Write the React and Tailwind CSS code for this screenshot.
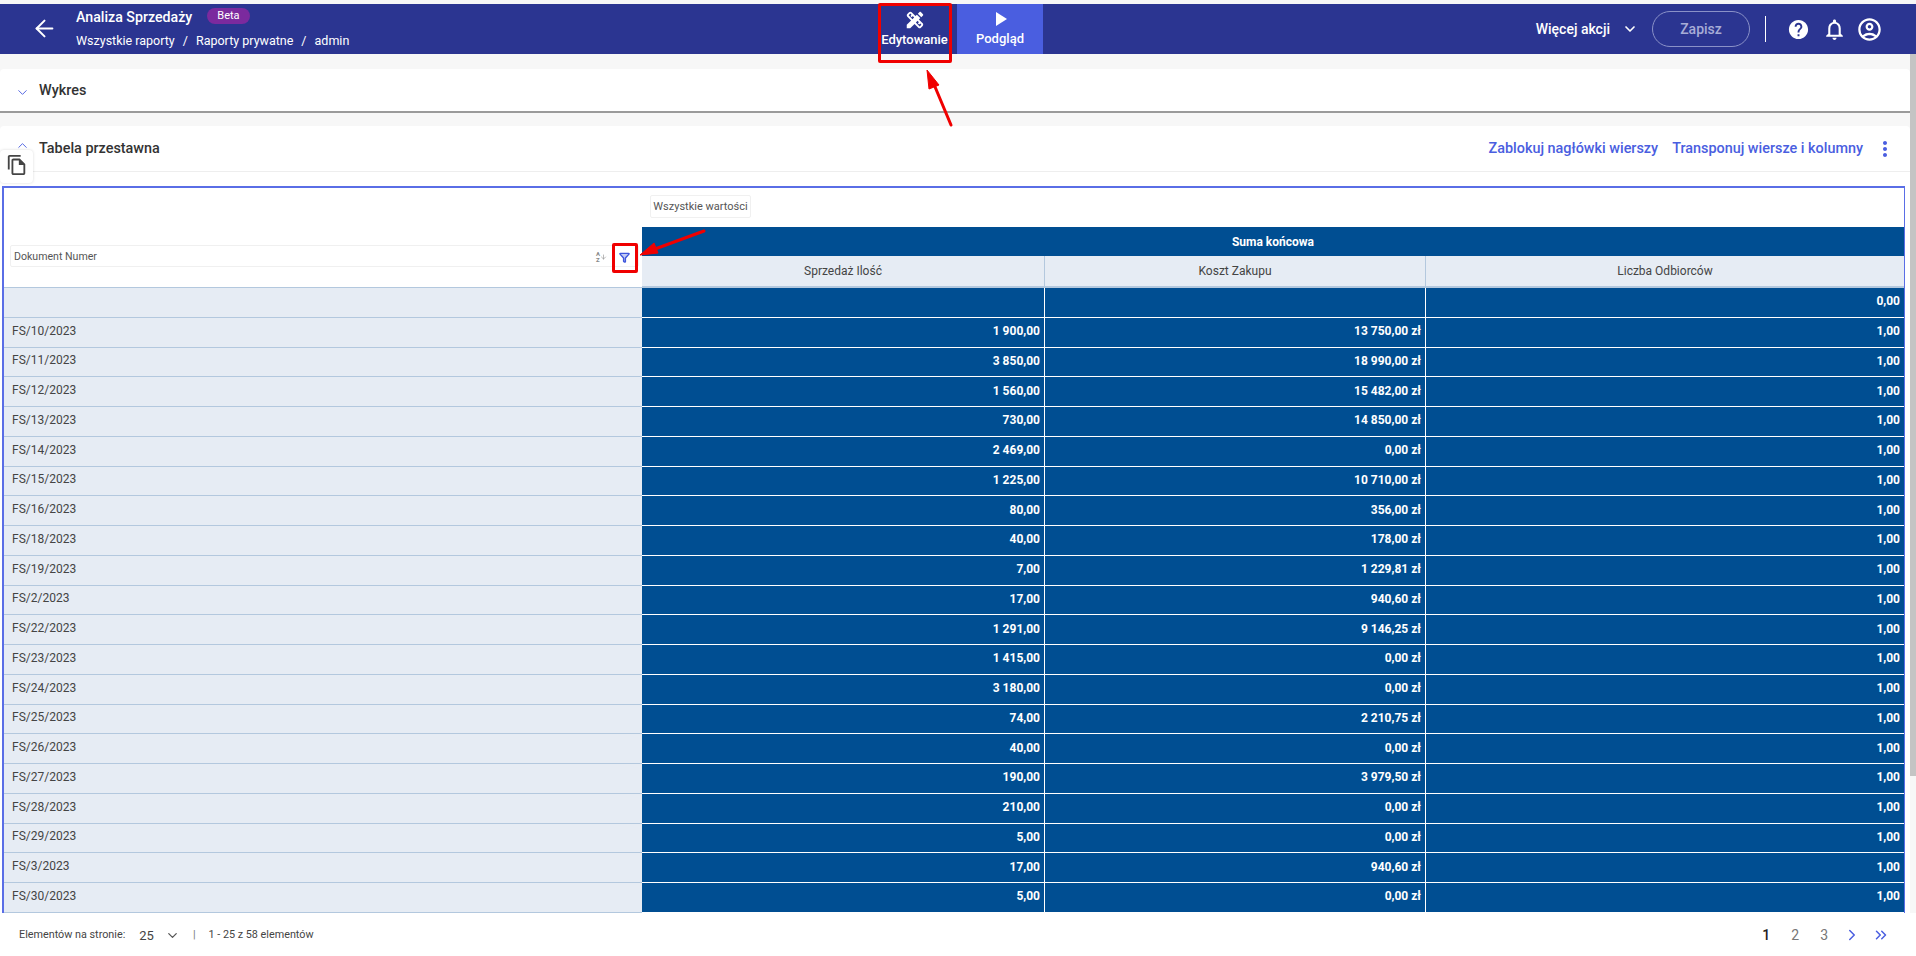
import { ArrowLeft, ArrowDown, ChevronDown, ChevronUp, ChevronRight, ChevronsRight, Funnel } from "lucide-react";
import { MdDesignServices, MdPlayArrow, MdHelp, MdNotificationsNone, MdOutlineAccountCircle, MdOutlineFileCopy, MdMoreVert } from "react-icons/md";

const rows = [
  ["FS/10/2023", "1 900,00", "13 750,00 zł"],
  ["FS/11/2023", "3 850,00", "18 990,00 zł"],
  ["FS/12/2023", "1 560,00", "15 482,00 zł"],
  ["FS/13/2023", "730,00", "14 850,00 zł"],
  ["FS/14/2023", "2 469,00", "0,00 zł"],
  ["FS/15/2023", "1 225,00", "10 710,00 zł"],
  ["FS/16/2023", "80,00", "356,00 zł"],
  ["FS/18/2023", "40,00", "178,00 zł"],
  ["FS/19/2023", "7,00", "1 229,81 zł"],
  ["FS/2/2023", "17,00", "940,60 zł"],
  ["FS/22/2023", "1 291,00", "9 146,25 zł"],
  ["FS/23/2023", "1 415,00", "0,00 zł"],
  ["FS/24/2023", "3 180,00", "0,00 zł"],
  ["FS/25/2023", "74,00", "2 210,75 zł"],
  ["FS/26/2023", "40,00", "0,00 zł"],
  ["FS/27/2023", "190,00", "3 979,50 zł"],
  ["FS/28/2023", "210,00", "0,00 zł"],
  ["FS/29/2023", "5,00", "0,00 zł"],
  ["FS/3/2023", "17,00", "940,60 zł"],
  ["FS/30/2023", "5,00", "0,00 zł"],
];

function Row({ name, qty, cost, count }) {
  return (
    <div className="grid grid-cols-[638px_403px_381px_1fr] h-[29.75px] text-[12px]">
      <div className="flex items-center pb-[3px] pl-[8px] bg-[#e6ecf4] border-b border-[#b3c8de] text-[#444]">{name}</div>
      <div className="flex items-center justify-end pb-[2px] pr-[4px] bg-[#004e92] border-b border-r border-white font-bold text-white">{qty}</div>
      <div className="flex items-center justify-end pb-[2px] pr-[4px] bg-[#004e92] border-b border-r border-white font-bold text-white">{cost}</div>
      <div className="flex items-center justify-end pb-[2px] pr-[4px] bg-[#004e92] border-b border-white font-bold text-white">{count}</div>
    </div>
  );
}

export default function App() {
  return (
    <div className="relative h-[956px] w-full overflow-hidden bg-[#f7f7f7] pt-[4px] font-['Roboto',sans-serif]">
      {/* top bar */}
      <header className="flex h-[50px] items-center bg-[#2b3591] text-white">
        <div className="flex w-[872px] items-center">
          <ArrowLeft className="ml-[31px] mt-[-2px] h-[27px] w-[27px]" strokeWidth={1.8} />
          <div className="ml-[18px]">
            <div className="flex items-center gap-[15px] h-[20px]">
              <span className="text-[14.2px] font-medium">Analiza Sprzedaży</span>
              <span className="rounded-full bg-[#7b2a9e] px-[10px] text-[11px] leading-[16px] mt-[-4px]">Beta</span>
            </div>
            <div className="mt-[4px] flex gap-[8px] text-[12.5px] leading-[18px]">
              <span>Wszystkie raporty</span>
              <span>/</span>
              <span>Raporty prywatne</span>
              <span>/</span>
              <span>admin</span>
            </div>
          </div>
        </div>
        <div className="flex h-full w-[85px] flex-col items-center pt-[5px]">
          <MdDesignServices className="h-[22px] w-[22px]" />
          <span className="mt-[1px] text-[13px] font-medium leading-[16px]">Edytowanie</span>
        </div>
        <div className="flex h-full w-[86px] flex-col items-center bg-[#4a5ee0] pt-[3px]">
          <MdPlayArrow className="h-[24px] w-[24px]" />
          <span className="text-[13px] font-medium leading-[16px]">Podgląd</span>
        </div>
        <div className="ml-auto flex items-center pr-[33px]">
          <span className="text-[14px] font-medium">Więcej akcji</span>
          <ChevronDown className="ml-[12px] h-[16px] w-[16px]" strokeWidth={2.5} />
          <button className="ml-[14px] h-[36px] w-[98px] rounded-full border border-[#8a91c8] text-[14px] font-medium text-[#a7acd6]">Zapisz</button>
          <div className="ml-[15px] h-[26px] w-px bg-white" />
          <MdHelp className="ml-[21px] h-[23px] w-[23px]" />
          <MdNotificationsNone className="ml-[12px] h-[25px] w-[25px]" />
          <MdOutlineAccountCircle className="ml-[9px] h-[27px] w-[27px]" />
        </div>
      </header>

      {/* scrollbar */}
      <div className="absolute right-0 top-[54px] h-[722px] w-[6px] bg-[#c4c4c4]" />

      <main className="w-[1910px]">
        <section className="mt-[15px] flex h-[44px] items-center rounded-t-[4px] border-b-2 border-[#9a9a9a] bg-white pt-[2px]">
          <ChevronDown className="ml-[15px] mt-[3px] h-[15px] w-[15px] text-[#4a5ee0]" strokeWidth={1.5} />
          <span className="ml-[9px] text-[14.4px] font-medium text-[#333]">Wykres</span>
        </section>

        <section className="relative mt-[13px] flex h-[46px] items-center rounded-t-[4px] border-b border-[#eee] bg-white">
          <ChevronUp className="ml-[15px] mt-[-6px] h-[15px] w-[15px] text-[#4a5ee0]" strokeWidth={1.5} />
          <span className="ml-[9px] text-[14.4px] font-medium text-[#333]">Tabela przestawna</span>
          <div className="ml-auto flex items-center pr-[13px] text-[14.4px] font-medium text-[#4a5ee0]">
            <span>Zablokuj nagłówki wierszy</span>
            <span className="ml-[14px]">Transponuj wiersze i kolumny</span>
            <MdMoreVert className="ml-[10px] h-[24px] w-[24px]" />
          </div>
          <div className="absolute left-0 top-[24px] flex h-[33px] w-[33px] items-center justify-center rounded-[4px] bg-white pb-[4px] shadow-[0_0_3px_rgba(0,0,0,0.15)]">
            <MdOutlineFileCopy className="h-[22px] w-[22px] text-[#444]" />
          </div>
        </section>

        <div className="bg-white pl-[2px] pt-[14px]">
          <div className="w-[1903px] border-l-2 border-r border-t-2 border-[#5a6ee6]">
            <div className="grid grid-cols-[638px_403px_381px_1fr] text-[12px]">
              <div className="row-span-3 flex items-end border-b border-[#b3c8de] pb-[20px] pl-[6px] pr-[3px]">
                <div className="flex h-[22px] flex-1 items-center rounded-[2px] border border-[#f0f0f0] pl-[3px] pt-[2px] text-[10.6px] text-[#555]">
                  <span>Dokument Numer</span>
                  <div className="ml-auto flex items-center text-[#888]">
                    <div className="flex flex-col text-[6px] font-bold leading-[6px]">
                      <span>A</span>
                      <span>Z</span>
                    </div>
                    <ArrowDown className="h-[12px] w-[7px]" strokeWidth={2} />
                  </div>
                  <div className="ml-[3px] flex w-[28px] items-center justify-center">
                    <Funnel className="h-[11px] w-[11px] text-[#3d55dc] fill-[#3d55dc]/30" strokeWidth={3} />
                  </div>
                </div>
              </div>
              <div className="col-span-3 h-[39px] pl-[8px] pt-[7px]">
                <div className="flex h-[23px] w-[101px] items-center justify-center rounded-[2px] border border-[#f0f0f0] pt-[2px] text-[11px] text-[#555]">Wszystkie wartości</div>
              </div>
              <div className="col-span-3 flex h-[29px] items-center justify-center bg-[#004e92] font-bold text-white">Suma końcowa</div>
              <div className="flex h-[32px] items-center justify-center border-b-2 border-r border-[#b3c8de] bg-[#e6ecf4] pb-[1px] text-[#444]">Sprzedaż Ilość</div>
              <div className="flex h-[32px] items-center justify-center border-b-2 border-r border-[#b3c8de] bg-[#e6ecf4] pb-[1px] text-[#444]">Koszt Zakupu</div>
              <div className="flex h-[32px] items-center justify-center border-b-2 border-[#b3c8de] bg-[#e6ecf4] pb-[1px] text-[#444]">Liczba Odbiorców</div>
            </div>
            <Row name="" qty="" cost="" count="0,00" />
            {rows.map((r) => (
              <Row key={r[0]} name={r[0]} qty={r[1]} cost={r[2]} count="1,00" />
            ))}
          </div>
        </div>
      </main>

      {/* pager */}
      <footer className="flex h-[45px] w-full items-center bg-white text-[10.8px] text-[#444]">
        <span className="ml-[19px]">Elementów na stronie:</span>
        <span className="ml-[14px] text-[13px]">25</span>
        <ChevronDown className="ml-[11px] h-[15px] w-[15px] text-[#555]" strokeWidth={2} />
        <span className="ml-[13px] text-[#777]">|</span>
        <span className="ml-[13px]">1 - 25 z 58 elementów</span>
        <div className="ml-auto flex items-center pr-[26px] text-[14px]">
          <span className="font-medium text-[#222]">1</span>
          <span className="ml-[21px] text-[#777]">2</span>
          <span className="ml-[21px] text-[#777]">3</span>
          <ChevronRight className="ml-[15px] h-[18px] w-[18px] text-[#4a5ee0]" strokeWidth={2} />
          <ChevronsRight className="ml-[11px] h-[18px] w-[18px] text-[#4a5ee0]" strokeWidth={2} />
        </div>
      </footer>

      {/* red annotations */}
      <div className="absolute left-[878px] top-[3px] h-[60px] w-[74px] rounded-[2px] border-[3px] border-[#f00000]" />
      <div className="absolute left-[612px] top-[243px] h-[30px] w-[26px] rounded-[2px] border-[3px] border-[#f00000]" />
      <svg className="absolute left-0 top-0 pointer-events-none" width="1916" height="956" fill="none">
        <path d="M951 125L933 82" stroke="#f00000" strokeWidth="3" strokeLinecap="round" />
        <path d="M927 70L939 85L929 89Z" fill="#f00000" stroke="#f00000" strokeWidth="1" />
        <path d="M704 231L655 249" stroke="#f00000" strokeWidth="3" strokeLinecap="round" />
        <path d="M640 255L654 243L658 253Z" fill="#f00000" stroke="#f00000" strokeWidth="1" />
      </svg>
    </div>
  );
}
